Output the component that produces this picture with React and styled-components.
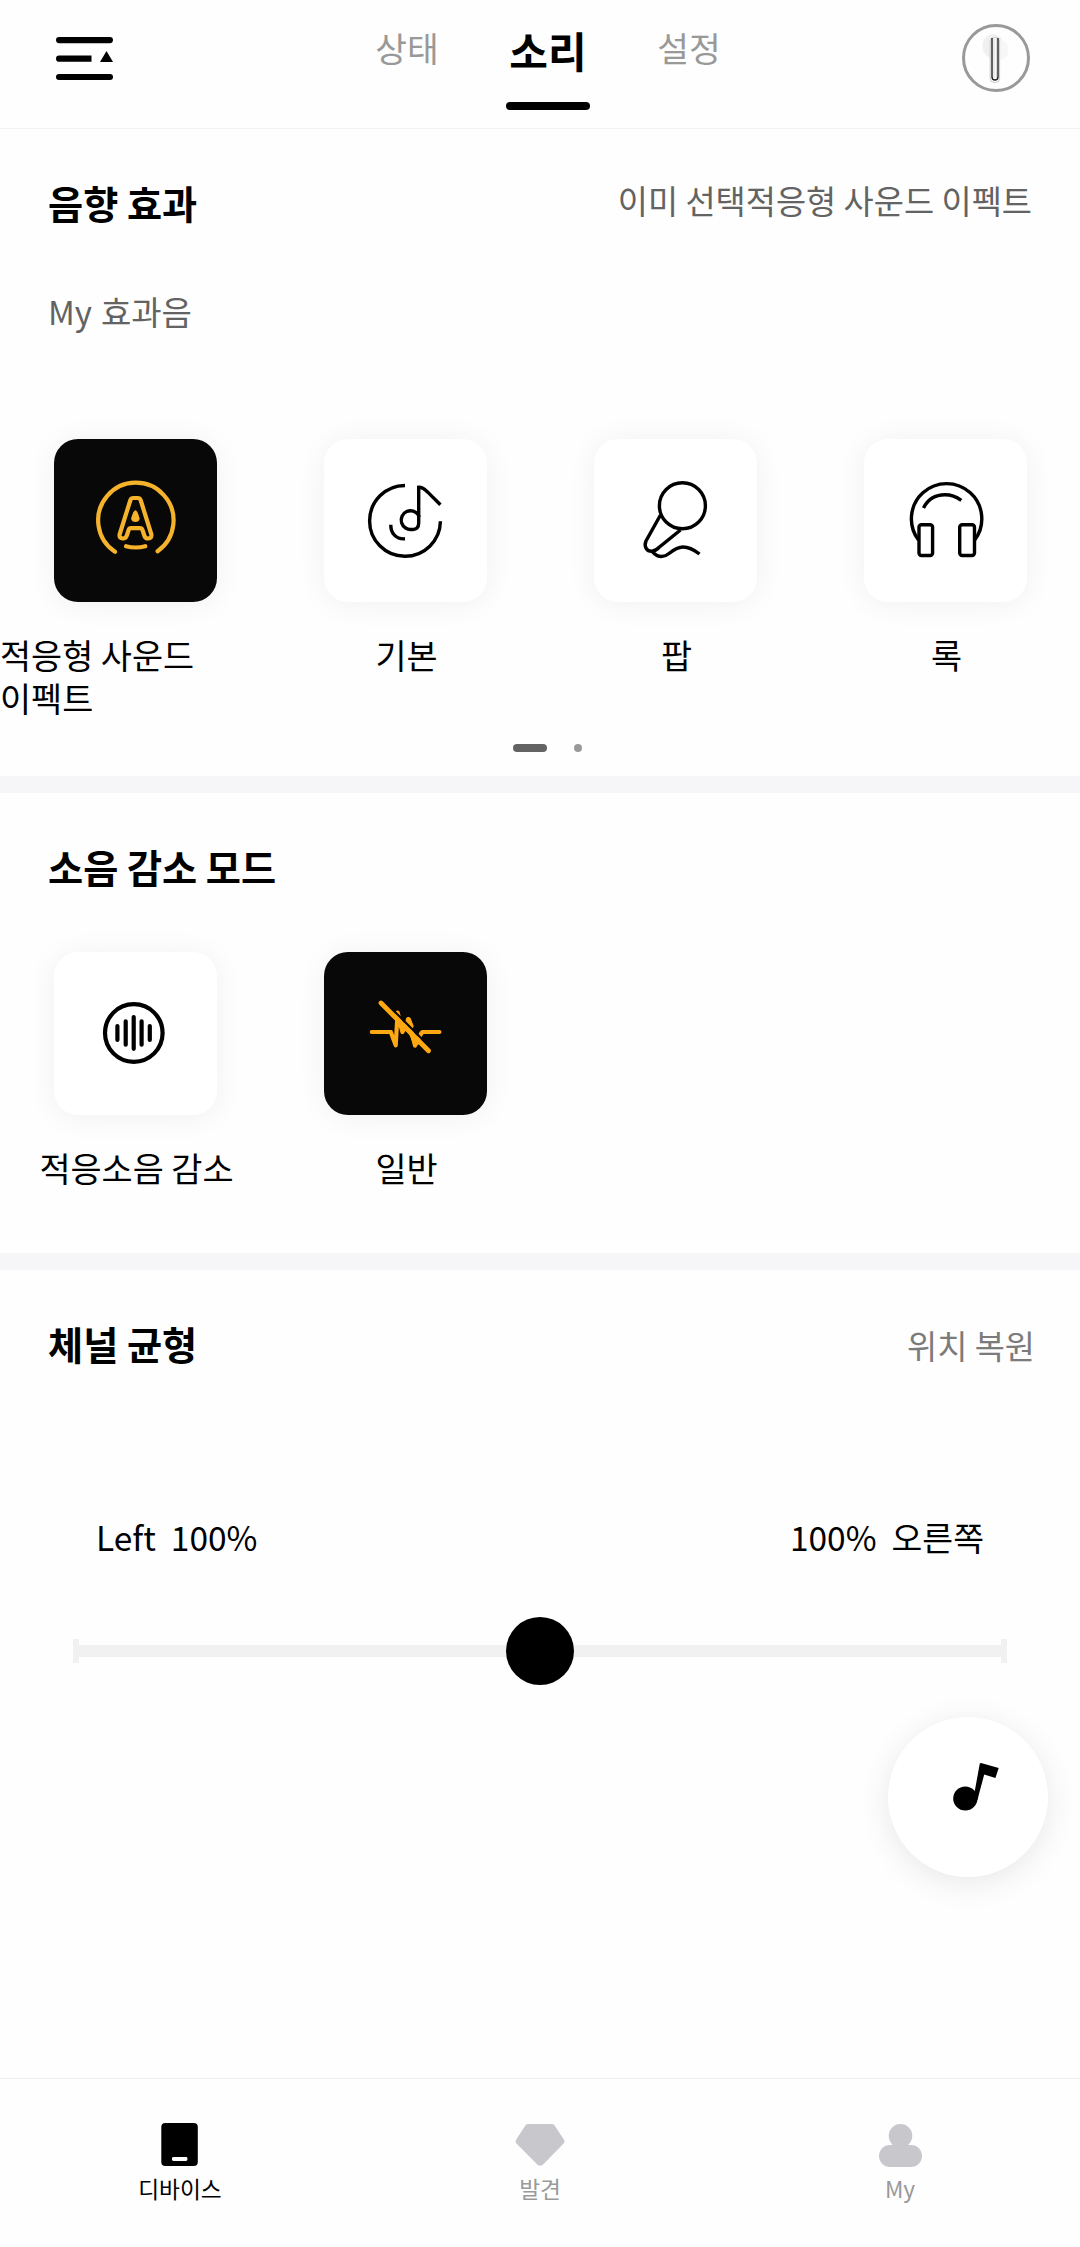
import React, { useState } from 'react'
import styled, { createGlobalStyle } from 'styled-components'

const colors = {
  BLACK: '#000',
  TILE_BLACK: '#080808',
  WHITE: '#fff',
  PAGE: '#fefefe',
  GOLD: '#f5b22b',
  ORANGE: '#fea812',
  DARKGREY: '#636363',
  MIDGREY: '#7b7b7b',
  GREY: '#999',
  ICONGREY: '#c8c7cc',
  BAND: '#f6f6f9',
  TRACK: '#f1f1f1',
}

const GlobalStyle = createGlobalStyle`
  * {
    box-sizing: border-box;
  }
  body {
    margin: 0;
    background: ${colors.PAGE};
    font-family: "Noto Sans CJK KR", sans-serif;
    color: ${colors.BLACK};
  }
  button {
    padding: 0;
    border: none;
    background: none;
    font-family: inherit;
    color: inherit;
    cursor: pointer;
  }
  svg {
    display: block;
  }
`

const Page = styled.div`
  position: relative;
  display: flex;
  flex-direction: column;
  width: 1080px;
  height: 2247px;
  overflow: hidden;
`

const Header = styled.header`
  display: flex;
  align-items: flex-start;
  height: 129px;
  padding: 0 50px 0 56px;
  border-bottom: 1px solid #f2f2f2;
`

const MenuButton = styled.button`
  margin-top: 37px;
`

const Tabs = styled.nav`
  display: flex;
  gap: 57px;
  margin-left: 252px;
`

const Tab = styled.button`
  display: flex;
  flex-direction: column;
  align-items: center;
  width: 84px;
  height: 110px;
  padding-top: ${props => props.$active ? '20px' : '17px'};
  font-size: ${props => props.$active ? '42px' : '34.5px'};
  font-weight: ${props => props.$active ? 700 : 400};
  line-height: 60px;
  white-space: nowrap;
  color: ${props => props.$active ? colors.BLACK : colors.GREY};
  &::after {
    content: "";
    display: ${props => props.$active ? 'block' : 'none'};
    width: 84px;
    height: 8px;
    margin-top: 22px;
    border-radius: 4px;
    background: ${colors.BLACK};
  }
`

const Avatar = styled.button`
  width: 68px;
  height: 68px;
  margin: 24px 0 0 auto;
  border: 3px solid ${colors.GREY};
  border-radius: 50%;
`

const Section = styled.section`
  display: flex;
  flex-direction: column;
  height: ${props => props.$height}px;
  padding-top: 44px;
`

const Band = styled.div`
  height: 17px;
  background: ${colors.BAND};
`

const HeadingRow = styled.div`
  display: flex;
  justify-content: space-between;
  height: 60px;
  padding: 0 48px;
`

const Heading = styled.h2`
  margin: 0;
  font-size: 38.2px;
  font-weight: 700;
  line-height: 60px;
`

const HeadingNote = styled.span`
  font-size: 32.8px;
  line-height: 54px;
  color: ${colors.DARKGREY};
`

const ResetButton = styled.button`
  margin-right: -3px;
  font-size: 32.8px;
  line-height: 62px;
  color: ${colors.MIDGREY};
`

const SubHeading = styled.h3`
  margin: 58px 0 0 48px;
  font-size: 33px;
  font-weight: 400;
  line-height: 40px;
  word-spacing: 1.5px;
  color: ${colors.DARKGREY};
`

const TileRow = styled.div`
  display: grid;
  grid-template-columns: repeat(4, 270px);
  margin-top: ${props => props.$top}px;
`

const TileCell = styled.div`
  display: flex;
  flex-direction: column;
  align-items: center;
`

const Tile = styled.button`
  width: 163px;
  height: 163px;
  margin-left: 1px;
  border-radius: 24px;
  background: ${props => props.$active ? colors.TILE_BLACK : colors.WHITE};
  box-shadow: 0 2px 30px rgba(0, 0, 0, 0.06);
`

const TileLabel = styled.div`
  margin-top: 31px;
  padding-left: ${props => props.$long ? 0 : '3px'};
  font-size: 33.8px;
  line-height: 43px;
  word-break: keep-all;
`

const Pager = styled.div`
  display: flex;
  justify-content: center;
  gap: 27px;
  margin: auto 0 24px;
  padding-left: 15px;
`

const PagerDot = styled.span`
  width: ${props => props.$active ? '34px' : '8px'};
  height: 8px;
  border-radius: 4px;
  background: ${props => props.$active ? colors.DARKGREY : colors.GREY};
`

const BalanceLabels = styled.div`
  display: flex;
  justify-content: space-between;
  margin-top: 138px;
  padding: 0 96px;
  font-size: 33.5px;
  line-height: 50px;
`

const BalanceSide = styled.div`
  display: flex;
  gap: 15px;
`

const Slider = styled.div`
  position: relative;
  display: flex;
  align-items: center;
  height: 68px;
  margin: 55px 73px 0;
`

const SliderEnd = styled.div`
  width: 6px;
  height: 24px;
  background: ${colors.TRACK};
`

const SliderTrack = styled.div`
  flex: 1;
  height: 12px;
  background: ${colors.TRACK};
`

const SliderThumb = styled.div`
  position: absolute;
  top: 0;
  width: 68px;
  height: 68px;
  border-radius: 50%;
  background: ${colors.BLACK};
  transform: translateX(-50%);
`

const MusicButton = styled.button`
  position: absolute;
  top: 1717px;
  right: 32px;
  width: 160px;
  height: 160px;
  border-radius: 50%;
  background: ${colors.WHITE};
  box-shadow: 0 6px 32px rgba(0, 0, 0, 0.09);
`

const BottomNav = styled.nav`
  display: grid;
  grid-template-columns: repeat(3, 1fr);
  height: 169px;
  margin-top: auto;
  border-top: 1px solid #eee;
`

const NavItem = styled.button`
  display: flex;
  flex-direction: column;
  align-items: center;
  padding-top: 43px;
  font-size: 22.7px;
  line-height: 42px;
  color: ${props => props.$active ? colors.BLACK : colors.GREY};
`

const MenuIcon = () => (
  <svg width="57" height="43" viewBox="0 0 57 43">
    <rect width="57" height="6.2" rx="3.1" />
    <path d="M3.1 18.6H35.5V24.8H3.1A3.1 3.1 0 0 1 3.1 18.6Z" />
    <path d="M50.5 14L57 25H44Z" />
    <rect y="37" width="57" height="6" rx="3" />
  </svg>
)

const EarbudIcon = () => (
  <svg width="62" height="62" viewBox="3 3 62 62" fill="none">
    <ellipse cx="31" cy="22" rx="10.5" ry="12" fill="#f0f0f0" />
    <ellipse cx="39" cy="26" rx="7.5" ry="9.5" fill="#f7f7f7" />
    <rect x="28.2" y="13.5" width="9.4" height="45" rx="4" fill="#fff" stroke="#bbb" strokeWidth="0.8" />
    <path d="M30 14V53Q30 56 33 56Q36 56 36 53V14" stroke="#222" strokeWidth="1.4" />
    <path d="M32 14V54M34.4 14V54" stroke="#ccc" strokeWidth="0.8" />
  </svg>
)

const TileSvg = ({ color = colors.BLACK, width = 3.4, children }) => (
  <svg width="163" height="163" viewBox="0 0 163 163" fill="none" stroke={ color } strokeWidth={ width }>
    { children }
  </svg>
)

const AdaptiveIcon = () => (
  <TileSvg color={ colors.GOLD } width={ 4.2 }>
    <g strokeLinecap="round" strokeLinejoin="round">
      <path d="M61 112.8A37.7 37.7 0 1 1 103.6 112.2" />
      <path d="M72 107.2Q81.5 109.8 91.3 107.2" />
      <path d="M76.4 61Q77.2 59 79.3 59H83.8Q85.9 59 86.6 61L97.4 95.5Q97.8 99.2 94.3 99.5Q91.3 99.7 90.3 96.5L88.5 91Q87.8 89.2 86 89.2H77Q75.2 89.2 74.6 91L72.8 96.5Q71.6 99.7 68.8 99.5Q65 99.2 65.6 95.5Z" />
    </g>
    <path d="M81.4 71.2Q83.4 71.2 85.6 79.3Q85.6 83 81.4 83Q77.2 83 77.2 79.3Q79.4 71.2 81.4 71.2Z" fill={ colors.GOLD } stroke="none" />
  </TileSvg>
)

const DefaultIcon = () => (
  <TileSvg>
    <path d="M81 46.5A35.4 35.4 0 1 0 116.4 82.3" />
    <path d="M94.7 78V48.3C98.5 48 101 50.5 104 53.4L116.4 65.7" />
    <path d="M94.7 76V84Q94.7 91 88 90.4A9.4 9.4 0 1 1 94.5 76" />
    <path d="M66.8 85.7C66.5 94 72 100.4 81 99.8" />
  </TileSvg>
)

const PopIcon = () => (
  <TileSvg>
    <circle cx="88.4" cy="66.8" r="23" />
    <path d="M66.5 76L52 102C49.5 108 53 112.5 58 112.2C61 112 63 110.5 65.5 108L86.5 91" />
    <path d="M58 112.3C64 119 70 118.5 75 114.5C80 110.5 84 108 89 108C95 108 101 111.5 105.5 115" />
  </TileSvg>
)

const RockIcon = () => (
  <TileSvg>
    <path d="M54.5 101A35.2 35.2 0 1 1 110.7 101" />
    <path d="M59.5 69C64 60 72 55.8 81 55.8C87 55.8 92 57.5 97.3 61.3" />
    <rect x="55" y="85.7" width="13.6" height="30.8" rx="2.5" />
    <rect x="95.7" y="85.7" width="14.8" height="30.8" rx="2.5" />
  </TileSvg>
)

const NoiseIcon = () => (
  <TileSvg width={ 4.2 }>
    <circle cx="79.8" cy="81" r="28.8" />
    <path strokeLinecap="round" d="M63.4 74V88M71.7 69.3V92.7M79.7 65V96.8M87.6 69.3V92.7M95.8 74V88" />
  </TileSvg>
)

const NormalIcon = () => (
  <TileSvg color={ colors.ORANGE } width={ 4.2 }>
    <g strokeLinecap="round" strokeLinejoin="round">
      <path d="M47.8 80H66.8L71.7 93.4L73.6 60.5L78.4 80L84.4 67.5L91 93.6L97.2 81.5L98.5 80H115.4" />
      <path d="M74 69L78.5 80L83 75L91 93L95 91Z" fill={ colors.ORANGE } strokeWidth="2" />
      <path d="M84.4 67.5L87 74" strokeWidth="5" />
      <path d="M62 51L106 95" stroke={ colors.TILE_BLACK } strokeWidth="2.2" />
      <path d="M57 51L104.5 98.8" strokeWidth="4.8" />
    </g>
  </TileSvg>
)

const NoteIcon = () => (
  <svg width="160" height="160" viewBox="0 0 160 160">
    <circle cx="77.3" cy="81.5" r="12.1" />
    <path d="M86.4 76L91.8 46.6L93 46L110.7 51L107.4 60.9L96.2 57.6L91 77Q90.2 82 88 86L84 84Z" />
  </svg>
)

const DeviceIcon = () => (
  <svg width="50" height="46" viewBox="0 0 50 46">
    <rect x="6.3" y="1" width="36.5" height="43" rx="4" />
    <rect x="17" y="35" width="15.4" height="4" rx="1.4" fill="#fff" />
  </svg>
)

const DiscoverIcon = () => (
  <svg width="50" height="46" viewBox="0 0 50 46">
    <path d="M13 5H37L46.5 19.3L26 40.4H24.4L3.6 19.3Z" fill={ colors.ICONGREY } stroke={ colors.ICONGREY } strokeWidth="6" strokeLinejoin="round" />
  </svg>
)

const PersonIcon = () => (
  <svg width="50" height="46" viewBox="0 0 50 46" fill={ colors.ICONGREY }>
    <circle cx="25.5" cy="13.8" r="11.8" />
    <path d="M19 21H32L33 25H18Z" />
    <rect x="4" y="23" width="43" height="22" rx="11" />
  </svg>
)

const tabs = ['상태', '소리', '설정']

const effects = [
  { name: '적응형 사운드 이펙트', Icon: AdaptiveIcon, long: true },
  { name: '기본', Icon: DefaultIcon },
  { name: '팝', Icon: PopIcon },
  { name: '록', Icon: RockIcon },
]

const noiseModes = [
  { name: '적응소음 감소', Icon: NoiseIcon },
  { name: '일반', Icon: NormalIcon },
]

const navItems = [
  { name: '디바이스', Icon: DeviceIcon },
  { name: '발견', Icon: DiscoverIcon },
  { name: 'My', Icon: PersonIcon },
]

const TileList = ({ items, selected, top }) => (
  <TileRow $top={ top }>
    { items.map(({ name, Icon, long }) => (
      <TileCell key={ name }>
        <Tile $active={ name === selected }><Icon /></Tile>
        <TileLabel $long={ long }>{ name }</TileLabel>
      </TileCell>
    )) }
  </TileRow>
)

const App = () => {
  const [tab, setTab] = useState('소리')
  const [balance, setBalance] = useState(50)

  return (
    <Page>
      <GlobalStyle />
      <Header>
        <MenuButton><MenuIcon /></MenuButton>
        <Tabs>
          { tabs.map(name => (
            <Tab key={ name } $active={ name === tab } onClick={ () => setTab(name) }>{ name }</Tab>
          )) }
        </Tabs>
        <Avatar><EarbudIcon /></Avatar>
      </Header>

      <Section $height={ 647 }>
        <HeadingRow>
          <Heading>음향 효과</Heading>
          <HeadingNote>이미 선택적응형 사운드 이펙트</HeadingNote>
        </HeadingRow>
        <SubHeading>My 효과음</SubHeading>
        <TileList items={ effects } selected="적응형 사운드 이펙트" top={ 108 } />
        <Pager>
          <PagerDot $active />
          <PagerDot />
        </Pager>
      </Section>
      <Band />

      <Section $height={ 460 }>
        <HeadingRow>
          <Heading>소음 감소 모드</Heading>
        </HeadingRow>
        <TileList items={ noiseModes } selected="일반" top={ 55 } />
      </Section>
      <Band />

      <Section $height={ 780 }>
        <HeadingRow>
          <Heading>체널 균형</Heading>
          <ResetButton onClick={ () => setBalance(50) }>위치 복원</ResetButton>
        </HeadingRow>
        <BalanceLabels>
          <BalanceSide><span>Left</span><span>100%</span></BalanceSide>
          <BalanceSide><span>100%</span><span>오른쪽</span></BalanceSide>
        </BalanceLabels>
        <Slider>
          <SliderEnd />
          <SliderTrack />
          <SliderEnd />
          <SliderThumb style={{ left: `${ balance }%` }} />
        </Slider>
      </Section>

      <BottomNav>
        { navItems.map(({ name, Icon }, i) => (
          <NavItem key={ name } $active={ i === 0 }>
            <Icon />
            { name }
          </NavItem>
        )) }
      </BottomNav>

      <MusicButton><NoteIcon /></MusicButton>
    </Page>
  )
}

export default App
